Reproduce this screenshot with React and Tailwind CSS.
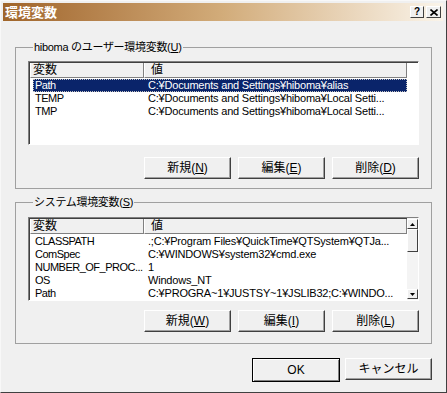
import React from "react";

const userRows = [
  ["Path", "C:¥Documents and Settings¥hiboma¥alias"],
  ["TEMP", "C:¥Documents and Settings¥hiboma¥Local Setti..."],
  ["TMP", "C:¥Documents and Settings¥hiboma¥Local Setti..."],
];

const systemRows = [
  ["CLASSPATH", ".;C:¥Program Files¥QuickTime¥QTSystem¥QTJa..."],
  ["ComSpec", "C:¥WINDOWS¥system32¥cmd.exe"],
  ["NUMBER_OF_PROC...", "1"],
  ["OS", "Windows_NT"],
  ["Path", "C:¥PROGRA~1¥JUSTSY~1¥JSLIB32;C:¥WINDO..."],
  ["PATHEXT", ".COM;.EXE;.BAT;.CMD;.VBS;.VBE;.JS;.JSE;.WSF;.WSH"],
];

function Btn({ children, def }) {
  return (
    <div
      className={`flex items-center justify-center bg-[#f0f0f0] text-[12px] leading-none text-black border ${
        def
          ? "w-[88px] h-[24px] border-black shadow-[inset_1px_1px_0_white,inset_-1px_-1px_0_#808080]"
          : "w-[87px] h-[22px] border-t-white border-l-white border-r-[#404040] border-b-[#404040] shadow-[inset_-1px_-1px_0_#a0a0a0]"
      }`}
    >
      {children}
    </div>
  );
}

function HeaderCell({ children, className }) {
  return (
    <div
      className={`h-[15px] flex items-center pl-[2px] bg-[#f0f0f0] border-l border-l-white border-r border-r-[#808080] border-b border-b-[#808080] text-[12px] leading-none ${className}`}
    >
      {children}
    </div>
  );
}

function ListView({ rows, selected, scroll }) {
  return (
    <div className="w-[391px] h-[84px] flex bg-white border-t border-l border-t-[#808080] border-l-[#808080] border-r border-b border-r-white border-b-white shadow-[inset_1px_1px_0_#404040] overflow-hidden">
      <div className="w-[378px] shrink-0 pl-[1px] pt-[1px] overflow-hidden">
        <div className="flex">
          <HeaderCell className="w-[114px] shrink-0">変数</HeaderCell>
          <HeaderCell className="w-[263px] shrink-0 pl-[6px]">値</HeaderCell>
          {!scroll && <HeaderCell className="w-[12px] shrink-0" />}
        </div>
        <div className="pt-[1px]">
          {rows.map(([name, value], i) => (
            <div
              key={name + i}
              className={`flex h-[13px] items-center text-[11px] leading-none whitespace-nowrap ml-[3px] w-[374px] tracking-[-0.2px] ${
                selected === i
                  ? "bg-[#0a246a] text-white outline outline-1 outline-dotted outline-[#c0c0c0] -outline-offset-1"
                  : "text-black"
              }`}
            >
              <span className="block w-[111px] shrink-0 pl-[2px] overflow-hidden tracking-[-0.5px]">
                {name}
              </span>
              <span className="block w-[263px] shrink-0 pl-[4px] overflow-hidden">
                {value}
              </span>
            </div>
          ))}
        </div>
      </div>
      {scroll && (
        <div className="w-[11px] flex flex-col bg-[#f4f4f4] pt-[1px]">
          <div className="h-[10px] flex items-center justify-center bg-[#f0f0f0] border border-t-white border-l-white border-r-[#404040] border-b-[#404040]">
            <svg width="5" height="3" viewBox="0 0 5 3">
              <path d="M2.5 0L5 3H0z" fill="#000" />
            </svg>
          </div>
          <div className="h-[23px] bg-[#f0f0f0] border border-t-white border-l-white border-r-[#404040] border-b-[#404040]" />
          <div className="flex-1" />
          <div className="h-[10px] mb-[1px] flex items-center justify-center bg-[#f0f0f0] border border-t-white border-l-white border-r-[#404040] border-b-[#404040]">
            <svg width="5" height="3" viewBox="0 0 5 3">
              <path d="M0 0H5L2.5 3z" fill="#000" />
            </svg>
          </div>
        </div>
      )}
    </div>
  );
}

function Group({ label, rows, selected, scroll, buttons, className }) {
  return (
    <fieldset
      className={`ml-[12px] w-[417px] border border-[#a0a0a0] pl-[12px] ${className}`}
    >
      <legend className="ml-[5px] px-[1px] text-[11px] leading-[16px] tracking-[-0.3px] text-black">
        {label}
      </legend>
      <div className={scroll ? "mt-[7px]" : "mt-[6px]"}>
        <ListView rows={rows} selected={selected} scroll={scroll} />
      </div>
      <div
        className={`flex justify-end gap-[7px] w-[391px] ${
          scroll ? "mt-[9px] pb-[11px]" : "mt-[12px] pb-[9px]"
        }`}
      >
        {buttons.map((b, i) => (
          <Btn key={i}>{b}</Btn>
        ))}
      </div>
    </fieldset>
  );
}

export default function App() {
  return (
    <div className="w-[447px] h-[393px] bg-[#f0f0f0] border border-t-[#f8f8f8] border-l-[#f8f8f8] border-r-[#404040] border-b-[#404040] p-[2px] font-['Liberation_Sans','Noto_Sans_CJK_JP',sans-serif] overflow-hidden">
      <div className="h-[18px] w-[440px] flex items-center justify-between bg-gradient-to-r from-[#a0652a] via-[#d2ac7a] to-[#faf4ea] pl-[2px] pr-[2px]">
        <span className="text-white font-bold text-[13px] leading-none">
          環境変数
        </span>
        <div className="flex gap-[2px] items-center">
          <div className="w-[14px] h-[12px] flex items-center justify-center bg-[#f0f0f0] border border-t-white border-l-white border-r-[#404040] border-b-[#404040] text-[10px] font-bold leading-none">
            ?
          </div>
          <div className="w-[15px] h-[12px] flex items-center justify-center bg-[#f0f0f0] border border-t-white border-l-white border-r-[#404040] border-b-[#404040]">
            <svg width="8" height="7" viewBox="0 0 8 7">
              <path d="M0.5 0.5L7.5 6.5M7.5 0.5L0.5 6.5" stroke="#000" strokeWidth="1.6" />
            </svg>
          </div>
        </div>
      </div>

      <Group
        className="mt-[18px]"
        label={
          <>
            hiboma のユーザー環境変数(<u>U</u>)
          </>
        }
        rows={userRows}
        selected={0}
        buttons={[
          <>新規(<u>N</u>)</>,
          <>編集(<u>E</u>)</>,
          <>削除(<u>D</u>)</>,
        ]}
      />

      <Group
        className="mt-[5px]"
        label={
          <>
            システム環境変数(<u>S</u>)
          </>
        }
        rows={systemRows}
        scroll
        buttons={[
          <>新規(<u>W</u>)</>,
          <>編集(<u>I</u>)</>,
          <>削除(<u>L</u>)</>,
        ]}
      />

      <div className="flex justify-end gap-[5px] w-[429px] mt-[14px]">
        <Btn def>OK</Btn>
        <Btn def={false}>キャンセル</Btn>
      </div>
    </div>
  );
}
